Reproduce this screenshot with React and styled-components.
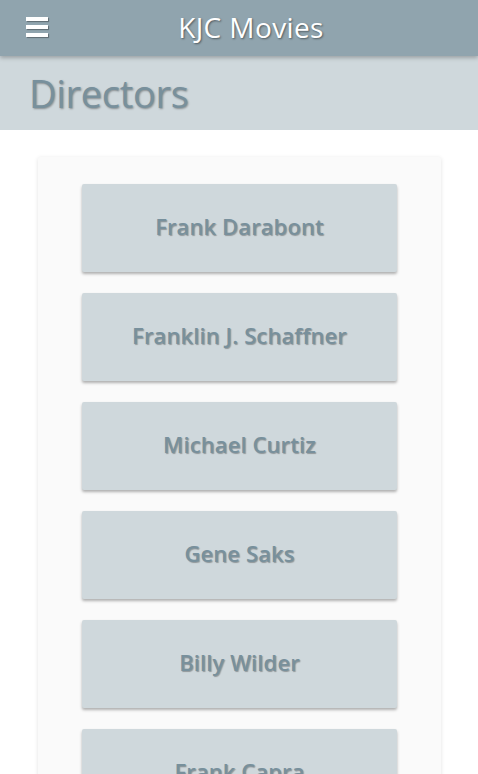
import React from "react";
import styled, { createGlobalStyle } from "styled-components";

const Global = createGlobalStyle`
  html, body { margin: 0; padding: 0; background: #ffffff; }
  body { font-family: "Open Sans", "Noto Sans", sans-serif; overflow: hidden; }
  * { box-sizing: border-box; }
`;

const Page = styled.div`
  width: 478px;
  height: 774px;
  overflow: hidden;
  display: flex;
  flex-direction: column;
`;

const Header = styled.header`
  flex-shrink: 0;
  height: 56px;
  background: #90a4ae;
  display: flex;
  align-items: center;
  position: relative;
  z-index: 2;
  box-shadow: 0 2px 4px rgba(0, 0, 0, 0.25);
`;

const Burger = styled.div`
  position: absolute;
  left: 26px;
  top: 17px;
  width: 22px;
  display: flex;
  flex-direction: column;
  gap: 4px;
`;

const Bar = styled.span`
  display: block;
  height: 4px;
  background: #ffffff;
  box-shadow: 1px 1px 1px rgba(0, 0, 0, 0.35);
`;

const Brand = styled.h1`
  margin: 0;
  flex: 1;
  text-align: center;
  padding-left: 24px;
  padding-bottom: 2px;
  color: #ffffff;
  font-size: 28px;
  font-weight: 400;
  letter-spacing: 0.4px;
  text-shadow: 1px 1px 2px rgba(0, 0, 0, 0.45);
`;

const TitleBand = styled.div`
  flex-shrink: 0;
  height: 74px;
  background: #cfd8dc;
  display: flex;
  align-items: center;
  padding-left: 29px;
`;

const Title = styled.h2`
  margin: 0;
  color: #78909c;
  font-size: 38px;
  font-weight: 400;
  letter-spacing: -0.3px;
  text-shadow: 1px 1px 2px rgba(0, 0, 0, 0.35);
`;

const Main = styled.main`
  flex-shrink: 0;
  padding: 27px 37px 0 38px;
`;

const Card = styled.section`
  background: #fafafa;
  border-radius: 2px;
  box-shadow: 0 1px 4px rgba(0, 0, 0, 0.12);
  padding: 27px 44px 40px;
  display: flex;
  flex-direction: column;
  gap: 21px;
`;

const DirectorButton = styled.button`
  flex-shrink: 0;
  height: 88px;
  border: none;
  border-radius: 2px;
  background: #cfd8dc;
  box-shadow: 0 2px 3px rgba(0, 0, 0, 0.3);
  color: #78909c;
  font-family: "Open Sans", "Noto Sans", sans-serif;
  font-size: 22px;
  font-weight: 600;
  letter-spacing: 0.1px;
  padding: 0 0 4px;
  text-shadow: 1px 1px 1px rgba(0, 0, 0, 0.3);
  cursor: pointer;
`;

const directors = [
  "Frank Darabont",
  "Franklin J. Schaffner",
  "Michael Curtiz",
  "Gene Saks",
  "Billy Wilder",
  "Frank Capra",
];

export default function App() {
  return (
    <Page>
      <Global />
      <Header>
        <Burger aria-label="menu">
          <Bar />
          <Bar />
          <Bar />
        </Burger>
        <Brand>KJC Movies</Brand>
      </Header>
      <TitleBand>
        <Title>Directors</Title>
      </TitleBand>
      <Main>
        <Card>
          {directors.map((d) => (
            <DirectorButton key={d}>{d}</DirectorButton>
          ))}
        </Card>
      </Main>
    </Page>
  );
}
